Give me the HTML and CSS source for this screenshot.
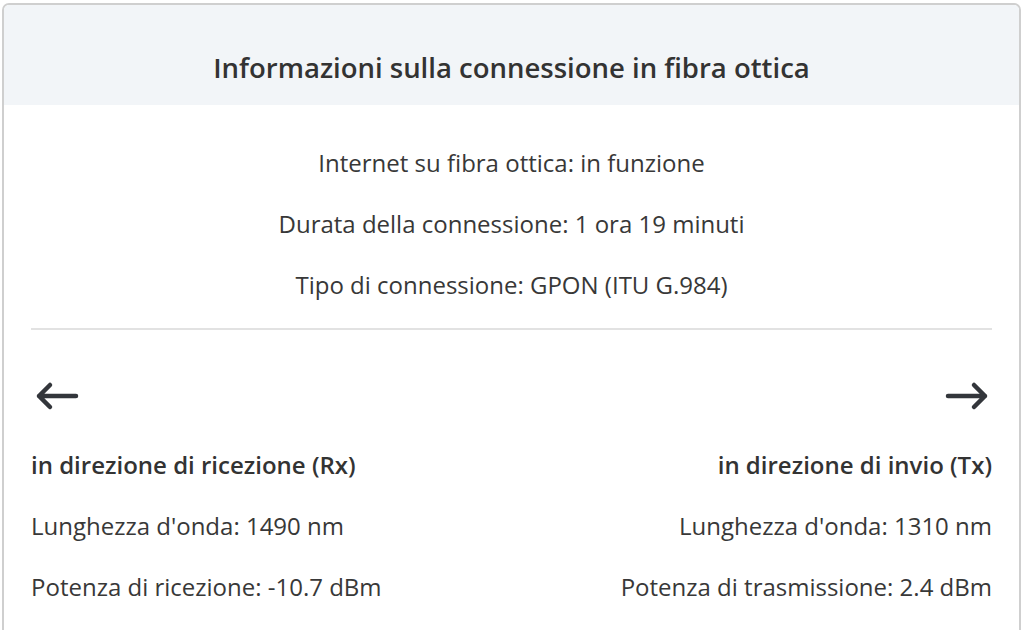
FILE: index.html
```html
<!DOCTYPE html>
<html lang="it">
<head>
<meta charset="utf-8">
<title>Informazioni sulla connessione in fibra ottica</title>
<link rel="stylesheet" href="styles.css">
</head>
<body>
<div class="card">
  <div class="card-header">
    <h1 class="title">Informazioni sulla connessione in fibra ottica</h1>
  </div>
  <div class="card-body">
    <div class="summary">
      <p class="line">Internet su fibra ottica: in funzione</p>
      <p class="line">Durata della connessione: 1 ora 19 minuti</p>
      <p class="line">Tipo di connessione: GPON (ITU G.984)</p>
    </div>
    <hr class="divider">
    <div class="directions">
      <div class="dir dir-rx">
        <svg class="arrow" width="46" height="30" viewBox="0 0 46 30" aria-hidden="true">
          <path d="M42 15 H5 M16 4 L5 15 L16 26" fill="none" stroke="#33363b" stroke-width="4.5" stroke-linecap="round" stroke-linejoin="round"/>
        </svg>
        <p class="dir-title">in direzione di ricezione (Rx)</p>
        <p class="line">Lunghezza d'onda: 1490 nm</p>
        <p class="line">Potenza di ricezione: -10.7 dBm</p>
      </div>
      <div class="dir dir-tx">
        <svg class="arrow" width="46" height="30" viewBox="0 0 46 30" aria-hidden="true">
          <path d="M4 15 H41 M30 4 L41 15 L30 26" fill="none" stroke="#33363b" stroke-width="4.5" stroke-linecap="round" stroke-linejoin="round"/>
        </svg>
        <p class="dir-title">in direzione di invio (Tx)</p>
        <p class="line">Lunghezza d'onda: 1310 nm</p>
        <p class="line">Potenza di trasmissione: 2.4 dBm</p>
      </div>
    </div>
  </div>
</div>
</body>
</html>
```

FILE: styles.css
```css
html, body {
  margin: 0;
  padding: 0;
  background: #ffffff;
}
body {
  font-family: "Open Sans", "Noto Sans", sans-serif;
  color: #383838;
  padding: 3px 3px 0 2px;
}
.card {
  border: 2px solid #cfcfcf;
  border-bottom: none;
  border-radius: 7px 7px 0 0;
  overflow: hidden;
  height: 640px;
}
.card-header {
  background: #f2f5f8;
  height: 100px;
  display: flex;
  align-items: center;
  justify-content: center;
}
.title {
  margin: 0;
  font-size: 27.5px;
  font-weight: 600;
  color: #333333;
  line-height: 32px;
  padding-top: 26px;
}
.card-body {
  padding: 43px 27px 0 27px;
}
.summary {
  text-align: center;
}
.line, .dir-title {
  margin: 0 0 31px 0;
  font-size: 24px;
  line-height: 30px;
}
.dir-title {
  font-weight: 600;
  color: #333333;
}
.divider {
  border: none;
  border-top: 2px solid #e2e2e2;
  margin: -3px 0 0 0;
}
.directions {
  display: flex;
  justify-content: space-between;
  padding-top: 51px;
}
.dir {
  display: flex;
  flex-direction: column;
}
.dir-rx {
  align-items: flex-start;
}
.dir-tx {
  align-items: flex-end;
  text-align: right;
}
.arrow {
  display: block;
  margin-bottom: 39px;
}
.dir-rx .arrow {
  margin-left: 3px;
}
.dir-tx .arrow {
  margin-right: 2px;
}
```
